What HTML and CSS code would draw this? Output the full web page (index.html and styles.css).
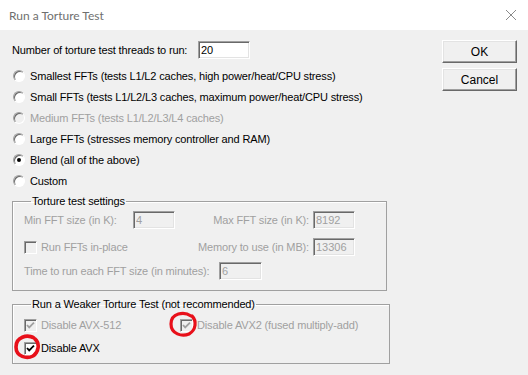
FILE: index.html
```html
<!DOCTYPE html>
<html lang="en">
<head>
<meta charset="UTF-8">
<title>Run a Torture Test</title>
<link rel="stylesheet" href="styles.css">
</head>
<body>
    <div class="titlebar">
        <span class="title">Run a Torture Test</span>
        <svg class="close" width="12" height="12" viewBox="0 0 12 12">
            <path d="M1 1 L11 11 M11 1 L1 11" stroke="#8a8a8a" stroke-width="1" fill="none"/>
        </svg>
    </div>
    <div class="dialog">
        <div class="main">
            <div class="threads">
                <label for="threads">Number of torture test threads to run:</label>
                <input type="text" id="threads" class="edit" value="20">
            </div>

            <div class="radio-row"><span class="radio"></span><span>Smallest FFTs (tests L1/L2 caches, high power/heat/CPU stress)</span></div>
            <div class="radio-row"><span class="radio"></span><span>Small FFTs (tests L1/L2/L3 caches, maximum power/heat/CPU stress)</span></div>
            <div class="radio-row disabled"><span class="radio"></span><span>Medium FFTs (tests L1/L2/L3/L4 caches)</span></div>
            <div class="radio-row"><span class="radio"></span><span>Large FFTs (stresses memory controller and RAM)</span></div>
            <div class="radio-row"><span class="radio checked"></span><span>Blend (all of the above)</span></div>
            <div class="radio-row"><span class="radio"></span><span>Custom</span></div>

            <!-- Parametros customizados (desabilitados) -->
            <fieldset class="group settings">
                <legend>Torture test settings</legend>
                <div class="set-row first">
                    <label class="lbl-min">Min FFT size (in K):</label>
                    <input type="text" class="edit small" value="4" disabled>
                    <span class="right">
                        <label>Max FFT size (in K):</label>
                        <input type="text" class="edit small" value="8192" disabled>
                    </span>
                </div>
                <div class="set-row second">
                    <span class="check-item"><span class="check"></span><span>Run FFTs in-place</span></span>
                    <span class="right">
                        <label>Memory to use (in MB):</label>
                        <input type="text" class="edit small" value="13306" disabled>
                    </span>
                </div>
                <div class="set-row third">
                    <label class="lbl-time">Time to run each FFT size (in minutes):</label>
                    <input type="text" class="edit small wide" value="6" disabled>
                </div>
            </fieldset>

            <fieldset class="group weaker">
                <legend>Run a Weaker Torture Test (not recommended)</legend>
                <div class="set-row">
                    <span class="check-item avx512">
                        <span class="check checked"><svg width="13" height="13" viewBox="0 0 13 13"><path d="M3 6 L5.2 8.4 L10 3.6" stroke="#a0a0a0" stroke-width="1.8" fill="none"/></svg></span>
                        <span>Disable AVX-512</span>
                    </span>
                    <span class="check-item">
                        <span class="check checked"><svg width="13" height="13" viewBox="0 0 13 13"><path d="M3 6 L5.2 8.4 L10 3.6" stroke="#a0a0a0" stroke-width="1.8" fill="none"/></svg></span>
                        <span>Disable AVX2 (fused multiply-add)</span>
                    </span>
                </div>
                <div class="set-row avx-row">
                    <span class="check-item enabled">
                        <span class="check checked on"><svg width="13" height="13" viewBox="0 0 13 13"><path d="M3 6 L5.2 8.4 L10 3.6" stroke="#000" stroke-width="1.8" fill="none"/></svg></span>
                        <span>Disable AVX</span>
                    </span>
                </div>
            </fieldset>
        </div>
        <div class="buttons">
            <button>OK</button>
            <button>Cancel</button>
        </div>
    </div>

    <!-- marcacoes em vermelho feitas a mao -->
    <svg class="marks" width="528" height="375" viewBox="0 0 528 375">
        <path d="M191 316 C184 311 171 313 171 324 C171 334 182 337 189 334 C196 330 197 321 192 316" stroke="#e8101a" stroke-width="3.2" fill="none" stroke-linecap="round"/>
        <path d="M34 338 C27 334 16 337 16 347 C16 357 27 359 33 356 C39 352 40 343 35 339" stroke="#e8101a" stroke-width="3.6" fill="none" stroke-linecap="round"/>
    </svg>
</body>
</html>
```

FILE: styles.css
```css
body {
    margin: 0;
    width: 528px;
    height: 375px;
    overflow: hidden;
    position: relative;
    background: #f0f0f0;
    font-family: "Liberation Sans", Arial, sans-serif;
    font-size: 11px;
    letter-spacing: -0.15px;
    white-space: nowrap;
    color: #000;
}

/* Barra de titulo */
.titlebar {
    height: 30px;
    background: #fff;
    display: flex;
    align-items: center;
    padding-left: 9px;
}
.title {
    font-family: Lato, sans-serif;
    font-size: 12px;
    letter-spacing: 0;
    color: #6f6f6f;
}
.close {
    margin-left: auto;
    margin-right: 11px;
}

.dialog {
    display: flex;
    padding: 11px 11px 0 12px;
}
.main {
    width: 375px;
}

.threads {
    height: 18px;
    display: flex;
    align-items: center;
    margin-bottom: 6px;
}
.threads label {
    width: 186px;
}

/* Caixas de texto com borda afundada */
.edit {
    box-sizing: border-box;
    height: 18px;
    width: 52px;
    margin: 0;
    padding: 0 0 0 2px;
    font: inherit;
    letter-spacing: 0;
    color: #000;
    background: #fff;
    border: 1px solid;
    border-color: #a0a0a0 #fff #fff #a0a0a0;
    box-shadow: inset 1px 1px 0 #696969, inset -1px -1px 0 #e3e3e3;
    outline: none;
}
.edit.small {
    width: 42px;
}
.edit.wide {
    width: 43px;
}
.edit:disabled {
    background: #f0f0f0;
    color: #a0a0a0;
}

.radio-row {
    height: 21px;
    display: flex;
    align-items: center;
    padding-left: 1px;
}
.radio-row.disabled {
    color: #a0a0a0;
}
.radio {
    box-sizing: border-box;
    width: 12px;
    height: 12px;
    margin-right: 5px;
    border-radius: 50%;
    background: #fff;
    border: 1px solid;
    border-color: #a0a0a0 #fff #fff #a0a0a0;
    box-shadow: inset 1px 1px 0 #696969;
    position: relative;
}
.radio-row.disabled .radio {
    background: #f0f0f0;
}
.radio.checked::after {
    content: "";
    position: absolute;
    left: 3px;
    top: 3px;
    width: 4px;
    height: 4px;
    border-radius: 50%;
    background: #000;
}

/* Grupos */
.group {
    margin: 4px 0 0 0;
    padding: 3px 31px 10px 11px;
    border: 1px solid #a0a0a0;
    box-shadow: inset 1px 1px 0 #fff;
}
.group legend {
    margin-left: 7px;
    padding: 0 1px;
    line-height: 13px;
}
.weaker {
    margin-top: 7px;
    padding-top: 5px;
    padding-bottom: 6px;
}

.set-row {
    height: 18px;
    display: flex;
    align-items: center;
    color: #a0a0a0;
}
.set-row.second {
    margin-top: 9px;
}
.set-row.third {
    margin-top: 6px;
}
.set-row.avx-row {
    margin-top: 5px;
}
.lbl-min {
    width: 109px;
}
.lbl-time {
    width: 195px;
}
.right {
    margin-left: auto;
    display: flex;
    align-items: center;
    gap: 4px;
}

.check-item {
    display: flex;
    align-items: center;
}
.check-item.avx512 {
    width: 156px;
}
.check-item.enabled {
    color: #000;
}
.check {
    box-sizing: border-box;
    width: 13px;
    height: 13px;
    margin-right: 4px;
    background: #f0f0f0;
    border: 1px solid;
    border-color: #a0a0a0 #fff #fff #a0a0a0;
    box-shadow: inset 1px 1px 0 #696969;
    position: relative;
}
.check svg {
    position: absolute;
    left: -1px;
    top: -1px;
}
.check.on {
    background: #fff;
}

/* Botoes */
.buttons {
    margin-left: auto;
    display: flex;
    flex-direction: column;
    gap: 5px;
    margin-top: -1px;
}
.buttons button {
    width: 75px;
    height: 23px;
    padding: 0;
    font: inherit;
    font-size: 12px;
    letter-spacing: 0;
    color: #000;
    background: #f0f0f0;
    border: 1px solid;
    border-color: #fff #696969 #696969 #fff;
    box-shadow: inset -1px -1px 0 #a0a0a0, inset 1px 1px 0 #e3e3e3;
}

.marks {
    position: absolute;
    left: 0;
    top: 0;
    pointer-events: none;
}
```
